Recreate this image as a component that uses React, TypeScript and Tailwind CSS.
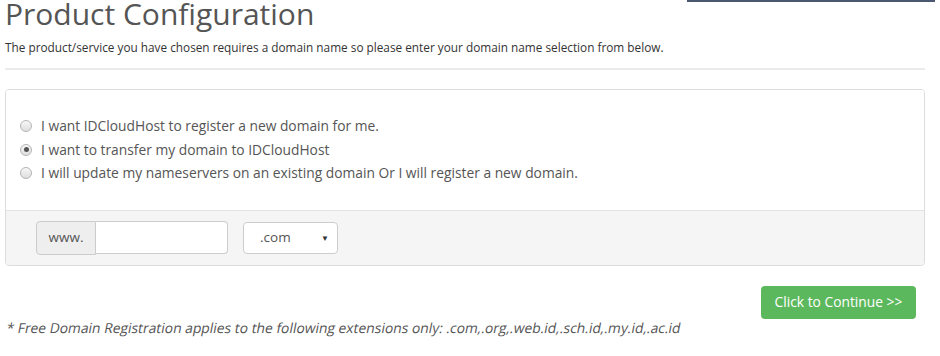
import React, { useState } from 'react';

const options = [
  'I want IDCloudHost to register a new domain for me.',
  'I want to transfer my domain to IDCloudHost',
  'I will update my nameservers on an existing domain Or I will register a new domain.',
];

const Radio = ({ checked }: { checked: boolean }) => (
  <span className="flex h-[12px] w-[12px] shrink-0 items-center justify-center rounded-full border border-[#b4b4b4] bg-gradient-to-b from-[#f7f7f7] to-[#dedede]">
    {checked && <span className="h-[5px] w-[5px] rounded-full bg-[#555]" />}
  </span>
);

export default function App() {
  const [selected, setSelected] = useState(1);

  return (
    <div className="relative h-[356px] w-[940px] overflow-hidden bg-white font-['Open_Sans',sans-serif] text-[#555]">
      <div className="absolute right-[5px] top-0 h-[2px] w-[248px] bg-[#4b5872]" />

      <div className="px-[5px]">
        <h1 className="text-[30px] font-normal leading-[28px] text-[#555]">Product Configuration</h1>
        <p className="mt-[11px] text-[11.8px] leading-[16px] text-[#333]">
          The product/service you have chosen requires a domain name so please enter your domain name selection from below.
        </p>
        <div className="mt-[13px] h-[2px] w-[920px] bg-[#ebebeb]" />

        <div className="mt-[19px] w-[920px] overflow-hidden rounded-[4px] border border-[#dcdcdc]">
          <div className="flex flex-col gap-[5px] bg-white pb-[27px] pl-[14px] pr-[16px] pt-[27px]">
            {options.map((label, idx) => (
              <label
                key={idx}
                onClick={() => setSelected(idx)}
                className="flex cursor-pointer items-center gap-[9px] text-[13.8px] leading-[18.5px] text-[#555]"
              >
                <Radio checked={selected === idx} />
                <span>{label}</span>
              </label>
            ))}
          </div>

          <div className="flex items-center gap-[15px] border-t border-[#e3e3e3] bg-[#f5f5f5] px-[30px] pb-[10px] pt-[10px]">
            <div className="flex h-[34px]">
              <span className="flex w-[60px] items-center justify-center rounded-l-[4px] border border-[#ccc] bg-[#eee] text-[13.5px] text-[#555]">
                www.
              </span>
              <input
                className="h-[33px] w-[132px] rounded-r-[4px] border border-l-0 border-[#ccc] bg-white px-[10px] text-[13px] outline-none"
                type="text"
              />
            </div>
            <div className="flex h-[32px] w-[95px] items-center justify-between rounded-[4px] border border-[#ccc] bg-white pl-[16px] pr-[8px] text-[13.5px] text-[#555]">
              <span>.com</span>
              <span className="text-[8px] text-[#333]">▼</span>
            </div>
          </div>
        </div>

        <div className="mt-[20px] flex w-[911px] justify-end">
          <button className="h-[33px] w-[155px] rounded-[4px] bg-[#5cb85c] text-[13.8px] text-white">
            Click to Continue &gt;&gt;
          </button>
        </div>

        <p className="text-[13.85px] leading-[18px] text-[#555]">
          <span className="inline-block origin-bottom-left skew-x-[-11deg]">
            * Free Domain Registration applies to the following extensions only: .com,.org,.web.id,.sch.id,.my.id,.ac.id
          </span>
        </p>
      </div>
    </div>
  );
}
